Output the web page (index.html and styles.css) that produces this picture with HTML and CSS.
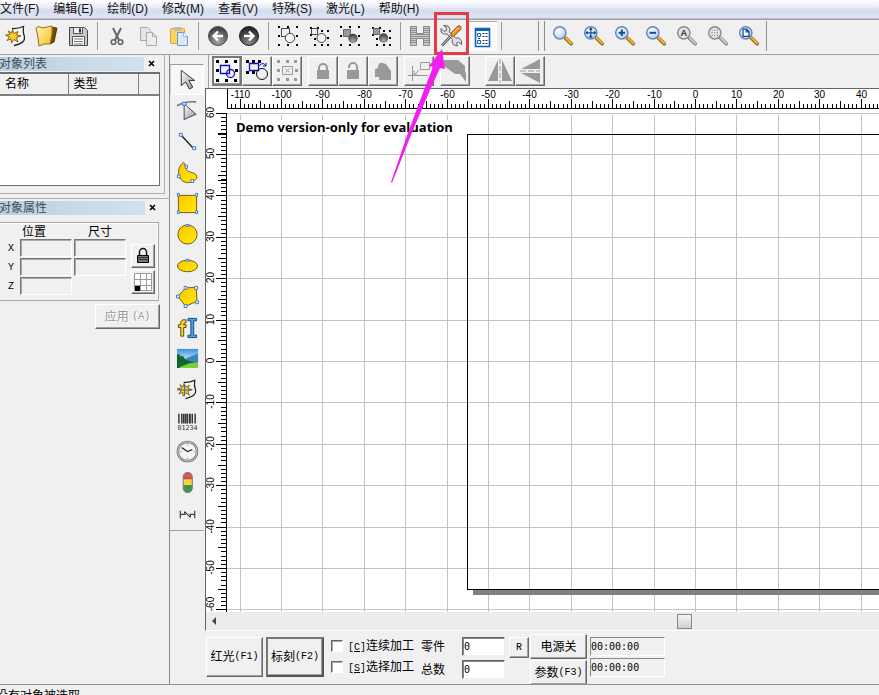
FILE: index.html
```html
<!DOCTYPE html>
<html lang="zh-CN">
<head>
<meta charset="utf-8">
<title>激光标刻</title>
<link rel="stylesheet" href="styles.css">
</head>
<body>
<svg class="defs" aria-hidden="true">
  <defs>
    <linearGradient id="gold" x1="0" y1="0" x2="1" y2="1"><stop offset="0" stop-color="#ffc400"/><stop offset="1" stop-color="#ffec00"/></linearGradient>
    <linearGradient id="folder" x1="0" y1="0" x2="1" y2="1"><stop offset="0" stop-color="#fff6b0"/><stop offset="1" stop-color="#f2c024"/></linearGradient>
    <linearGradient id="metal" x1="0" y1="0" x2="1" y2="1"><stop offset="0" stop-color="#fff"/><stop offset="1" stop-color="#8e9099"/></linearGradient>
    <radialGradient id="ball" cx=".5" cy=".75" r=".7"><stop offset="0" stop-color="#aaa"/><stop offset="1" stop-color="#3c3c3c"/></radialGradient>
    <radialGradient id="dark" cx=".5" cy=".85" r=".8"><stop offset="0" stop-color="#888"/><stop offset="1" stop-color="#222"/></radialGradient>
    <radialGradient id="lens" cx=".4" cy=".35" r=".7"><stop offset="0" stop-color="#fff"/><stop offset="1" stop-color="#a9ccf3"/></radialGradient>
    <linearGradient id="sky" x1="0" y1="0" x2="0" y2="1"><stop offset="0" stop-color="#3d8fe0"/><stop offset=".6" stop-color="#c9edfb"/></linearGradient>
    <linearGradient id="signal" x1="0" y1="0" x2="0" y2="1"><stop offset=".33" stop-color="#e05555"/><stop offset=".36" stop-color="#ffd43c"/><stop offset=".62" stop-color="#ffd43c"/><stop offset=".65" stop-color="#3a9c4e"/></linearGradient>
    <symbol id="magnifier" viewBox="0 0 24 24">
      <path d="M14.500 14 21 20.500" stroke="#9c6a10" stroke-width="4" stroke-linecap="round"/>
      <path d="M14.500 13.500 21 20" stroke="#f0b93c" stroke-width="2" stroke-linecap="round"/>
      <circle cx="8.500" cy="8.500" r="6.700" fill="url(#lens)" stroke="#6f86b4" stroke-width="1.600"/>
    </symbol>
    <symbol id="magnifier-off" viewBox="0 0 24 24">
      <path d="M14.500 14 21 20.500" stroke="#888" stroke-width="4" stroke-linecap="round"/>
      <path d="M14.500 13.500 21 20" stroke="#ccc" stroke-width="2" stroke-linecap="round"/>
      <circle cx="8.500" cy="8.500" r="6.700" fill="#e4e4e4" stroke="#8a8a8a" stroke-width="1.600"/>
    </symbol>
    <symbol id="handles" viewBox="0 0 24 24">
      <path d="M2 2h2v2H2zM11 2h2v2h-2zM20 2h2v2h-2zM2 11h2v2H2zM20 11h2v2h-2zM2 20h2v2H2zM11 20h2v2h-2zM20 20h2v2h-2z"/>
    </symbol>
    <symbol id="handles-small" viewBox="0 0 24 24">
      <path d="M3 3h2v2H3zM10 3h2v2h-2zM3 10h2v2H3zM14 6h2v2h-2zM20 6h2v2h-2zM20 13h2v2h-2zM7 14h2v2H7zM7 20h2v2H7zM14 20h2v2h-2zM20 20h2v2h-2z"/>
    </symbol>
    <symbol id="vector-file" viewBox="0 0 24 24">
      <path d="M8 4.500Q14 5 19.500 2.500Q18.500 8 20.500 13Q21.500 19 10 21.500" fill="#f7f7f7" stroke="#222" stroke-width="1.300"/>
      <path d="M8.500 5.500 10 9.500 14 7.500 12.500 11 17 12 12.500 13.500 14 18 10 15.500 7.500 19 7 15 3 16.500 5.500 13 1.500 11 6 10.500 4 7 7.500 9z" fill="#ffc831" stroke="#6b4b00" stroke-width=".8"/>
    </symbol>
  </defs>
</svg>
<div class="app">
  <nav class="menubar">
    <a href="#">文件(F)</a><a href="#">编辑(E)</a><a href="#">绘制(D)</a><a href="#">修改(M)</a><a href="#">查看(V)</a><a href="#">特殊(S)</a><a href="#">激光(L)</a><a href="#">帮助(H)</a>
  </nav>

  <div class="toolbar">
    <div class="tools">
      <button class="tool" aria-label="新建"><svg viewBox="0 0 24 24"><use href="#vector-file"/></svg></button>
      <button class="tool" aria-label="打开"><svg viewBox="0 0 24 24"><path d="M16 3 22 4 19 18 15 20z" fill="#7a4a00" stroke="#3a2500" stroke-width=".8"/><path d="M1 4Q4 1 7 4L17 2Q18 9 15 20Q9 19 4 22Q3 11 1 4z" fill="url(#folder)" stroke="#8c7220"/></svg></button>
      <button class="tool" aria-label="保存"><svg viewBox="0 0 24 24"><path d="M3.500 3.500h15l3 3v15h-18z" fill="#c9c9c9" stroke="#444"/><path d="M7.500 3.500h9v6h-9z" fill="#eee" stroke="#555"/><path d="M13 4.500h2v4h-2z" fill="#333"/><path d="M6.500 12.500h12v9h-12z" fill="#fff" stroke="#555"/><path d="M8 15h9M8 17.500h9M8 20h9" stroke="#777"/></svg></button>
      <span class="sep"></span>
      <button class="tool" aria-label="剪切"><svg viewBox="0 0 24 24" fill="none" stroke="#666"><path d="M8 4 14 16M16 4 10 16" stroke-width="2"/><circle cx="8.500" cy="18" r="2.300" stroke-width="1.600"/><circle cx="15.500" cy="18" r="2.300" stroke-width="1.600"/></svg></button>
      <button class="tool" aria-label="复制"><svg viewBox="0 0 24 24" fill="#e4e4e4" stroke="#aaa"><path d="M4.500 3.500h7l3 3v10h-10z"/><path d="M10.500 8.500h6l4 4v9h-10z" fill="#ececec"/><path d="M16.500 8.500v4h4" fill="none"/></svg></button>
      <button class="tool" aria-label="粘贴"><svg viewBox="0 0 24 24"><rect x="3.500" y="4.500" width="14" height="15" rx="1" fill="#fbd65a" stroke="#d4a72f"/><rect x="7" y="3" width="7" height="4" fill="#bbb"/><path d="M10.500 8.500h6l4 4v9h-10z" fill="#d5e8fc" stroke="#6d9bd0"/><path d="M16.500 8.500v4h4" fill="#fff" stroke="#8fb4df"/></svg></button>
      <span class="sep"></span>
      <button class="tool" aria-label="撤销"><svg viewBox="0 0 24 24"><circle cx="12" cy="12" r="9.500" fill="url(#ball)" stroke="#555"/><path d="M17 12H8M12 7.500 7.500 12l4.500 4.500" fill="none" stroke="#fff" stroke-width="2.400"/></svg></button>
      <button class="tool" aria-label="重做"><svg viewBox="0 0 24 24"><circle cx="12" cy="12" r="9.500" fill="url(#dark)" stroke="#222"/><path d="M7 12h9M12 7.500l4.500 4.500-4.500 4.500" fill="none" stroke="#fff" stroke-width="2.400"/></svg></button>
      <span class="sep"></span>
      <button class="tool" aria-label="组合"><svg viewBox="0 0 24 24"><use href="#handles"/><path d="M5.500 4.500h8v8h-8z" fill="#eee" stroke="#444"/><circle cx="14" cy="14" r="4.700" fill="#f4f4f4" stroke="#444"/></svg></button>
      <button class="tool" aria-label="分离组合"><svg viewBox="0 0 24 24"><use href="#handles-small"/><path d="M4.500 4.500h6v6h-6z" fill="#eee" stroke="#444"/><circle cx="14.500" cy="14" r="4.500" fill="#f4f4f4" stroke="#444"/></svg></button>
      <button class="tool" aria-label="群组"><svg viewBox="0 0 24 24"><use href="#handles"/><path d="M5.500 5.500h7v7h-7z" fill="#999" stroke="#666"/><circle cx="15" cy="14.500" r="4.700" fill="url(#ball)"/></svg></button>
      <button class="tool" aria-label="分离群组"><svg viewBox="0 0 24 24"><use href="#handles-small"/><path d="M4.500 4.500h6v6h-6z" fill="#999" stroke="#666"/><circle cx="14.500" cy="14" r="4.700" fill="url(#ball)"/></svg></button>
      <span class="sep"></span>
      <button class="tool" aria-label="填充"><svg viewBox="0 0 24 24"><path d="M2.500 2.500h6v7h7v-7h6v19h-6v-7h-7v7h-6z" fill="#c8c8c8" stroke="#888"/><path d="M3 4.500h5M3 6.500h5M3 8.500h5M3 10.500h18M3 12.500h18M3 14.500h5M3 16.500h5M3 18.500h5M16 4.500h5M16 6.500h5M16 8.500h5M16 14.500h5M16 16.500h5M16 18.500h5" stroke="#909090"/></svg></button>
      <button class="tool marked" aria-label="参数设置"><svg viewBox="0 0 24 24"><path d="M2 4.500 5 7.500 7.500 6.500 7 3 4.500 1.500 9 2 11 5 10.500 8 16.500 14 20 14 22.500 17 22.500 20.500 19.500 18 17.500 19 18.500 22 15 21 13 18 13.500 15.500 8 10 4.500 10 2 8z" fill="#dcdfe8" stroke="#555" stroke-width=".9"/><path d="M12 12 3 21.500" stroke="#555" stroke-width="2.600"/><path d="M12 12 3.500 21" stroke="#ddd"/><path d="M20 4 14 10" stroke="#8a4a08" stroke-width="5" stroke-linecap="round"/><path d="M20 4 14 10" stroke="#f5922b" stroke-width="3.400" stroke-linecap="round"/><path d="M19.500 3.500 14 9" stroke="#ffc887"/></svg></button>
      <button class="tool pressed" aria-label="对象属性栏"><svg viewBox="0 0 24 24"><path d="M5.500 3.500h14v18h-14z" fill="#fff" stroke="#1161bd" stroke-width="1.600"/><path d="M5 3h15v3H5z" fill="#1161bd"/><path d="M7.500 8.500h3v3h-3zM7.500 15.500h3v3h-3z" fill="#fff" stroke="#1161bd"/><path d="M12.500 8.500h2M15.500 8.500h2M12.500 11.500h2M15.500 11.500h2M12.500 15.500h2M15.500 15.500h2M12.500 18.500h2M15.500 18.500h2M8 13.500h2" stroke="#234"/></svg></button>
      <span class="sep"></span>
    </div>
    <div class="tools zoom-tools">
      <button class="tool" aria-label="缩放"><svg viewBox="0 0 24 24"><use href="#magnifier"/></svg></button>
      <button class="tool" aria-label="平移"><svg viewBox="0 0 24 24"><use href="#magnifier"/><path d="M8.500 3.500v10M3.500 8.500h10M7 5l1.500-1.500L10 5M7 12l1.500 1.500L10 12M5 7 3.500 8.500 5 10M12 7l1.500 1.500L12 10" fill="none" stroke="#164a94" stroke-width="1.300"/></svg></button>
      <button class="tool" aria-label="放大"><svg viewBox="0 0 24 24"><use href="#magnifier"/><path d="M8.500 5v7M5 8.500h7" stroke="#164a94" stroke-width="2.200"/></svg></button>
      <button class="tool" aria-label="缩小"><svg viewBox="0 0 24 24"><use href="#magnifier"/><path d="M5 8.500h7" stroke="#164a94" stroke-width="2.200"/></svg></button>
      <button class="tool" aria-label="显示全部"><svg viewBox="0 0 24 24"><use href="#magnifier-off"/><text x="8.500" y="12.500" class="lens-text">A</text></svg></button>
      <button class="tool" aria-label="显示选择"><svg viewBox="0 0 24 24"><use href="#magnifier-off"/><path d="M5 5.500h8M5 8.500h8M5 11.500h8" stroke="#555" stroke-dasharray="1 2"/></svg></button>
      <button class="tool" aria-label="显示页面"><svg viewBox="0 0 24 24"><use href="#magnifier"/><path d="M5.500 4.500h4L12 7v5.500H5.500z M9 4.500v3h3" fill="#fff" stroke="#164a94" stroke-width="1.400"/></svg></button>
    </div>
  </div>

  <div class="main">
    <aside class="side">
      <section class="panel">
        <header class="panel-head"><h2>对象列表</h2><button class="close" aria-label="关闭对象列表"><svg viewBox="0 0 8 8"><path d="M1 1l5 5M6 1 1 6"/></svg></button></header>
        <div class="list-box">
          <table class="list"><thead><tr><th class="col-name">名称</th><th class="col-type">类型</th><th></th></tr></thead></table>
        </div>
      </section>
      <section class="panel props">
        <header class="panel-head"><h2>对象属性</h2><button class="close" aria-label="关闭对象属性"><svg viewBox="0 0 8 8"><path d="M1 1l5 5M6 1 1 6"/></svg></button></header>
        <div class="group">
          <div class="fields">
            <span></span><span class="field-head">位置</span><span class="field-head size">尺寸</span>
            <label for="px">X</label><input id="px" disabled><input aria-label="X 尺寸" disabled>
            <label for="py">Y</label><input id="py" disabled><input aria-label="Y 尺寸" disabled>
            <label for="pz">Z</label><input id="pz" disabled>
          </div>
          <div class="prop-buttons">
            <button class="raised" aria-label="锁定比例"><svg viewBox="0 0 20 20"><path d="M6.500 9V6a3.500 3.500 0 0 1 7 0v3" fill="none" stroke="#111" stroke-width="1.500"/><path d="M4.500 9.500h11v7h-11z" fill="#777" stroke="#000"/><path d="M5 11.500h10M5 13.500h10" stroke="#333"/></svg></button>
            <button class="raised" aria-label="基准点"><svg viewBox="0 0 20 20"><path d="M1 1h18v18H1z" fill="#fff"/><path d="M1.500 1.500h17v17h-17zM7.500 1v18M13.500 1v18M1 7.500h18M1 13.500h18" fill="none" stroke="#999"/><path d="M2 14h5v5H2z"/></svg></button>
          </div>
        </div>
        <button class="raised apply" disabled>应用&nbsp;<span class="latin">(A)</span></button>
      </section>
    </aside>

    <div class="draw-bar">
      <button class="draw selected" aria-label="选取"><svg viewBox="0 0 24 24"><path d="M5.500 2.500v16l4.500-4 4 7.500 3.500-2-4-7h6z" fill="url(#metal)" stroke="#333"/></svg></button>
      <button class="draw" aria-label="节点"><svg viewBox="0 0 24 24"><path d="M1 7Q10 2 21 3" fill="none" stroke="#777" stroke-width="1.600"/><path d="M8.500 5v16.500l5-2.500 7.500-3z" fill="url(#metal)" stroke="#3c4260"/><path d="M6.500 3.500h4v3h-4z" fill="#cde" stroke="#3776c4"/></svg></button>
      <button class="draw" aria-label="直线"><svg viewBox="0 0 24 24"><path d="M5 5 18 19" stroke="#222" stroke-width="1.400"/><path d="M3.500 3.500h3v3h-3zM17.500 17.500h3v3h-3z" fill="#fff" stroke="#3776c4"/></svg></button>
      <button class="draw" aria-label="曲线"><svg viewBox="0 0 24 24"><path d="M8 1.500C3 5 2 10 3 15C4 20 9 23 14 22.500C20 21.500 23.500 17 21 14.500C18 11 13 12.500 11 9C9 6 10 2 8 1.500z" fill="url(#gold)" stroke="#6d5a10"/><path d="M9.500 4.500h2.500v3H9.500zM1.500 14.500h3v3h-3zM15.500 19.500h3v3h-3z" fill="#fff" stroke="#3776c4"/></svg></button>
      <button class="draw" aria-label="矩形"><svg viewBox="0 0 24 24"><path d="M2.500 3.500h19v18h-19z" fill="url(#gold)" stroke="#6d5a10"/><path d="M1.500 1.500h2v3h-2zM20.500 1.500h2v3h-2zM1.500 19.500h2v3h-2zM20.500 19.500h2v3h-2z" fill="#fff" stroke="#3776c4"/></svg></button>
      <button class="draw" aria-label="圆"><svg viewBox="0 0 24 24"><circle cx="12" cy="12" r="10" fill="url(#gold)" stroke="#6d5a10"/><path d="M10.500 1.500h3v2h-3z" fill="#fff" stroke="#3776c4"/></svg></button>
      <button class="draw" aria-label="椭圆"><svg viewBox="0 0 24 24"><ellipse cx="12" cy="12.500" rx="10.500" ry="6" fill="url(#gold)" stroke="#6d5a10"/><path d="M10.500 5.500h3v2h-3z" fill="#fff" stroke="#3776c4"/></svg></button>
      <button class="draw" aria-label="多边形"><svg viewBox="0 0 24 24"><path d="M2 12 10 3 21 2.500 22 17 10 22z" fill="url(#gold)" stroke="#6d5a10"/><path d="M.5 10.500h3v3h-3zM8.500 1.500h3v3h-3zM19.500 1.500h3v3h-3zM20.500 16.500h3v3h-3zM8.500 20.500h3v3h-3z" fill="#fff" stroke="#3776c4"/></svg></button>
      <button class="draw" aria-label="文字"><svg viewBox="0 0 24 24"><path d="M5 21V12H2.500V9H5V6Q6 3 10.500 4v3Q8 6.500 8 9h2.500v3H8v9z" fill="#ffd52e" stroke="#58480d"/><path d="M12.500 2.500h9v2.500h-3v15h3v2.500h-9v-2.500h3v-15h-3z" fill="#45a3e8" stroke="#134d88"/></svg></button>
      <button class="draw" aria-label="位图"><svg viewBox="0 0 24 24"><path d="M1 2h22v20H1z" fill="url(#sky)"/><path d="M10 12 17 9 23 7v10H12z" fill="#3c85c5"/><path d="M1 8 3 7 5 10 7 9 9 12 12 14 23 17v5H1z" fill="#15652e"/><path d="M6 20 14 17 23 16v6H3z" fill="#7dcd42"/></svg></button>
      <button class="draw" aria-label="矢量文件"><svg viewBox="0 0 24 24"><use href="#vector-file"/><path d="M1 12.500h16M9 7v12" stroke="#246bbf"/></svg></button>
      <button class="draw" aria-label="条码"><svg viewBox="0 0 24 24"><path d="M3 5v10M6 5v10M8 5v10M12 5v10M17 5v10M20 5v10" stroke="#333" stroke-width="1.500"/><path d="M10 5v10M14.500 5v10" stroke="#333" stroke-width="2"/><text x="12" y="22" class="bar-text">01234</text></svg></button>
      <button class="draw" aria-label="延时"><svg viewBox="0 0 24 24"><circle cx="12" cy="12" r="10" fill="#f4f4f4" stroke="#777" stroke-width="2.600"/><circle cx="12" cy="12" r="10" fill="none" stroke="#ccc"/><path d="M6 8 12 12 17 10" fill="none" stroke="#333" stroke-width="1.400"/><path d="M12 4v2M12 18v2M4 12h2M18 12h2" stroke="#aaa"/></svg></button>
      <button class="draw" aria-label="输入输出"><svg viewBox="0 0 24 24"><rect x="7.500" y="1.500" width="9.500" height="21" rx="4.500" fill="url(#signal)" stroke="#777"/><path d="M9 8q3.200-2 6.500 0M9 16q3.200 2 6.500 0" fill="none" stroke="#666"/></svg></button>
      <button class="draw" aria-label="测量"><svg viewBox="0 0 24 24"><path d="M4.500 9v8M19.500 9v8M5 13h5M14 13h5M9 10l6 6M9 10v3M15 13v3" fill="none" stroke="#444" stroke-width="1.300"/></svg></button>
    </div>

    <div class="work">
      <div class="object-bar">
        <button class="raised obj active" aria-label="选择模式"><svg viewBox="0 0 24 24"><path d="M1 1h3v3H1zM10 1h3v3h-3zM19 1h3v3h-3zM1 10h3v3H1zM1 20h3v3H1zM10 20h3v3h-3zM19 20h3v3h-3zM20 10h3v3h-3z"/><path d="M5.500 6.500h9v8h-9z" fill="none" stroke="#11c" stroke-width="1.300"/><circle cx="15.500" cy="14.500" r="4" fill="none" stroke="#11c" stroke-width="1.300"/></svg></button>
        <button class="raised obj" aria-label="旋转模式"><svg viewBox="0 0 24 24"><path d="M1 1h3v3H1zM7 1h3v3H7zM13 1h3v3h-3zM1 12h3v3H1zM7 12h3v3H7z"/><path d="M4.500 4.500h9v7h-9z" fill="none" stroke="#11c" stroke-width="1.300"/><circle cx="17" cy="15" r="5.500" fill="none" stroke="#111"/><path d="M14 7Q18 2 21 7M18 7h3V4" fill="none" stroke="#11c"/></svg></button>
        <button class="raised obj off" aria-label="变换"><svg viewBox="0 0 24 24"><path d="M2 1h3v3H2zM11 1h3v3h-3zM19 1h3v3h-3zM2 10h3v3H2zM2 19h3v3H2zM11 19h3v3h-3zM19 19h3v3h-3zM20 10h3v3h-3z"/><path d="M7.500 7.500h10v8h-10zM10.500 9.500l4 4M14.500 9.500l-4 4" fill="none" stroke="#999"/></svg></button>
        <span class="bar-gap"></span>
        <button class="raised obj off" aria-label="锁定"><svg viewBox="0 0 24 24"><path d="M8 12V9a4 4 0 0 1 8 0v3" fill="none" stroke="#999" stroke-width="2"/><path d="M6 11h12v9H6z"/></svg></button>
        <button class="raised obj off" aria-label="解锁"><svg viewBox="0 0 24 24"><path d="M8 9V8a4 4 0 0 1 8 0v4" fill="none" stroke="#999" stroke-width="2"/><path d="M6 11h12v9H6z"/></svg></button>
        <button class="raised obj off" aria-label="全部解锁"><svg viewBox="0 0 24 24"><path d="M4 10 7 9Q7 3 12 4Q16 5 17 8L20 12v9H8v-3H4z"/></svg></button>
        <span class="bar-gap"></span>
        <button class="raised obj off" aria-label="移至原点"><svg viewBox="0 0 24 24" fill="none" stroke="#999"><path d="M13.500 3.500h9v7h-9zM1 16.500h20M5.500 7v15M12 11 7 16M7 12v4h4"/></svg></button>
        <span class="bar-gap"></span>
        <button class="raised obj off" aria-label="排列"><svg viewBox="0 0 24 24"><path d="M1 1h14l7 6v5l1 3v8l-6-8h-5L1 7z"/></svg></button>
        <span class="bar-gap wide"></span>
        <button class="raised obj off" aria-label="水平镜像"><svg viewBox="0 0 24 24"><path d="M10 1v21H0zM14 1v21h10z"/><path d="M12 0v24" stroke="#999" stroke-dasharray="5 2"/></svg></button>
        <button class="raised obj off" aria-label="垂直镜像"><svg viewBox="0 0 24 24"><path d="M3 10 22 0v10zM3 14h19v10z"/><path d="M2 12h20" stroke="#999" stroke-dasharray="6 2"/></svg></button>
      </div>
      <div class="viewport">
        <svg id="workspace" class="workspace" role="img" aria-label="工作区"></svg>
      </div>
      <div class="scrollbar"><button class="scroll-left" aria-label="向左滚动"></button><span class="thumb"></span></div>
      <form class="controls">
        <button type="button" class="raised mark">红光<span class="latin">(F1)</span></button>
        <button type="button" class="raised mark default">标刻<span class="latin">(F2)</span></button>
        <div class="checks">
          <label><input type="checkbox"><span><span class="latin">[<u>C</u>]</span>连续加工</span></label>
          <label><input type="checkbox"><span><span class="latin">[<u>S</u>]</span>选择加工</span></label>
        </div>
        <div class="counts">
          <label for="part">零件</label><input id="part" value="0">
          <label for="total">总数</label><input id="total" value="0">
        </div>
        <button type="button" class="raised reset">R</button>
        <div class="stack">
          <button type="button" class="raised">电源关</button>
          <button type="button" class="raised">参数<span class="latin">(F3)</span></button>
        </div>
        <div class="times">
          <output>00:00:00</output>
          <output>00:00:00</output>
        </div>
      </form>
    </div>
  </div>
  <footer class="status"><span>没有对象被选取</span></footer>
</div>
<svg class="arrow" viewBox="0 0 56 136" aria-hidden="true"><path d="M52 1 55 21 50 20 40 42 23 82 2 135 1 134 19 82 34 42 43 19 39 18z" fill="#f01ff0"/></svg>
<script src="workspace.js"></script>
</body>
</html>
```
FILE: styles.css
```css
* { box-sizing: border-box; }
html, body { margin: 0; height: 100%; overflow: hidden; }
body { position: relative; background: #f0f0f0; color: #000; font: 12px/16px "Liberation Sans", "Noto Sans CJK SC", sans-serif; }
button, input { font: inherit; color: inherit; margin: 0; padding: 0; border-radius: 0; }
button { background: none; border: 0; display: flex; align-items: center; justify-content: center; white-space: nowrap; }
svg { display: block; }
h2 { margin: 0; font: inherit; }
.latin { font-family: "Liberation Mono", monospace; font-size: 10px; }
.defs { position: absolute; width: 0; height: 0; }
.app { display: flex; flex-direction: column; height: calc(100% + 8px); }

.menubar { display: flex; flex: none; gap: 14px; height: 19px; background: linear-gradient(#fff, #eef1fa 30%, #d5dcef 60%, #dfe5f4); border-bottom: 1px solid #b6bccc; line-height: 19px; }
.menubar a { color: #111; text-decoration: none; white-space: nowrap; }

.toolbar { display: flex; flex: none; height: 36px; padding: 1px 0 3px; border-top: 1px solid #a0a0a0; border-bottom: 1px solid #a0a0a0; }
.tools { display: flex; align-items: center; }
.tools:first-child { width: 539px; border-right: 1px solid #909090; }
.zoom-tools { margin-left: 5px; padding-left: 2px; border-left: 1px solid #909090; border-right: 1px solid #909090; width: 223px; }
.tool { flex: none; width: 31px; height: 30px; }
.tool svg { width: 24px; height: 24px; }
.zoom-tools .tool svg { width: 22px; height: 22px; }
.tool.pressed { background: #fbfbfb; border-top: 1px solid #aaa; }
.tool.marked { position: relative; }
.tool.marked::after { content: ""; position: absolute; box-sizing: border-box; left: -1px; top: -9px; width: 35px; height: 43px; border: 3px solid #e53b40; }
.sep { flex: none; width: 8px; height: 28px; background: linear-gradient(90deg, transparent 4px, #999 4px, #999 5px, transparent 5px); }
.lens-text { font: bold 10px "Liberation Sans", sans-serif; text-anchor: middle; fill: #333; }

.main { display: flex; flex: 1; min-height: 0; }
.side { flex: none; width: 170px; border-right: 1px solid #8a8a8a; }
.panel { width: 165px; padding: 1px 4px 7px 0; border-right: 1px solid #b0b0b0; border-bottom: 1px solid #b0b0b0; }
.panel-head { display: flex; align-items: center; height: 16px; }
.panel-head h2 { width: 146px; height: 14px; background: linear-gradient(90deg, #bccfdc, #d3e1ee); color: #3d4f5e; line-height: 14px; text-indent: -1px; }
.close { width: 16px; height: 14px; }
.close svg { width: 8px; height: 8px; stroke: #000; stroke-width: 1.600; }
.list-box { height: 114px; background: #fff; border: 1px solid #707070; border-width: 2px 1px 1px 0; }
.list { width: 100%; border-collapse: collapse; table-layout: fixed; background: #f0f0f0; }
.list th { height: 21px; padding: 0 0 0 5px; text-align: left; font-weight: normal; border-right: 1px solid #808080; border-bottom: 2px solid #808080; }
.list th:last-child { border-right: 0; }
.col-name { width: 68px; }
.col-type { width: 70px; }
.props { width: 170px; margin-top: 4px; padding: 1px 9px 0 0; border-top: 1px solid #b0b0b0; border-right: 0; border-bottom: 0; }
.group { display: flex; gap: 5px; height: 79px; width: 159px; margin-top: 6px; border: 1px solid #a8a8a8; border-left: 0; box-shadow: inset -1px 1px #fff; }
.fields { display: grid; grid-template-columns: 18px 52px 52px; grid-template-rows: 15px 18px 18px 18px; row-gap: 1px; column-gap: 2px; align-content: start; width: 126px; }
.field-head { padding-left: 2px; line-height: 18px; }
.field-head.size { padding-left: 14px; }
.fields label { font: 10px/20px "Liberation Mono", monospace; text-align: right; padding-right: 4px; }
.fields input { width: 52px; height: 18px; background: #f0f0f0; border: 1px solid; border-color: #777 #fff #fff #777; box-shadow: inset 1px 1px #aaa; }
.prop-buttons { display: flex; flex-direction: column; gap: 2px; padding-top: 21px; }
.prop-buttons .raised { width: 24px; height: 24px; }
.prop-buttons svg { width: 20px; height: 20px; }
.raised { background: #f0f0f0; border: 1px solid; border-color: #fff #696969 #696969 #fff; box-shadow: inset -1px -1px #a0a0a0; }
.apply { width: 65px; height: 25px; margin: 3px 0 0 95px; color: #999; text-shadow: 1px 1px #fff; }

.draw-bar { flex: none; width: 34px; height: 476px; padding-top: 9px; border-bottom: 1px solid #a0a0a0; }
.draw { width: 34px; height: 31px; }
.draw svg { width: 23px; height: 23px; }
.draw.selected { background: #f8f8f8; border: 1px solid; border-color: #999 #fff #fff #ccc; }
.bar-text { font: 7px "DejaVu Sans Mono", monospace; text-anchor: middle; fill: #333; }

.work { display: flex; flex-direction: column; flex: 1; min-width: 0; }
.object-bar { display: flex; flex: none; height: 33px; margin-left: 4px; padding: 1px 0 2px 3px; border-left: 1px solid #a0a0a0; }
.obj { flex: none; width: 30px; height: 30px; }
.obj svg { height: 24px; width: 24px; }
.obj.active { background: #f8f8f8; border: 2px solid #777; }
.obj.off { fill: #999; }
.bar-gap { flex: none; width: 6px; }
.bar-gap.wide { width: 15px; }
.viewport { flex: 1; min-height: 0; margin-left: 1px; background: #fff; border-left: 1px solid #666; border-top: 1px solid #666; overflow: hidden; }
.workspace { width: 100%; height: 100%; }
.workspace .tick { stroke: #000; }
.workspace .grid { stroke: #c4c4c4; }
.workspace .label { font: 10px "Liberation Sans", sans-serif; text-anchor: middle; }
.workspace .notice { font: bold 13px "Open Sans", sans-serif; }
.workspace .page { fill: none; stroke: #000; }
.workspace .shadow { fill: #808080; }
.scrollbar { display: flex; flex: none; align-items: center; height: 19px; margin-left: 1px; border-left: 1px solid #666; background: #ececec; border-bottom: 1px solid #fff; }
.scroll-left { width: 0; height: 0; margin-left: 6px; border: 4px solid transparent; border-left: 0; border-right-color: #444; }
.thumb { width: 15px; height: 15px; margin-left: calc(69% - 3px); background: linear-gradient(#f4f4f4, #cfcfcf); border: 1px solid #888; }

.controls { display: flex; flex: none; align-items: flex-start; height: 53px; padding: 3px 0 0 2px; }
.mark { width: 57px; height: 40px; margin: 3px 3px 0 0; }
.mark.default { border: 2px solid; border-color: #777 #555 #555 #777; width: 58px; }
.checks { display: grid; gap: 5px; width: 94px; padding: 4px 0 0 4px; }
.checks label { display: flex; gap: 5px; height: 16px; white-space: nowrap; }
.checks input { appearance: none; flex: none; width: 12px; height: 12px; margin-top: 2px; background: #fff; border: 1px solid; border-color: #666 #fff #fff #666; box-shadow: inset 1px 1px #aaa; }
.counts { display: grid; grid-template-columns: 41px 43px; row-gap: 2px; padding-top: 3px; }
.counts label { line-height: 21px; }
.counts input { width: 43px; height: 19px; padding: 0 1px; background: #fff; border: 1px solid; border-color: #666 #eee #eee #666; box-shadow: inset 1px 1px #888; font: 10px/14px "DejaVu Sans Mono", monospace; }
.reset { width: 20px; height: 21px; margin: 3px 1px 0 4px; font: 10px "Liberation Mono", monospace; }
.stack { display: grid; gap: 1px; width: 57px; margin-right: 3px; }
.stack .raised { height: 25px; }
.times { display: grid; gap: 2px; width: 75px; padding-top: 3px; }
.times output { height: 19px; border: 1px solid; border-color: #888 #fff #fff #888; font: 10px/17px "DejaVu Sans Mono", monospace; }
.status { flex: none; height: 19px; padding-top: 3px; border-top: 1px solid #909090; overflow: hidden; }
.status span { margin-left: -4px; }

.arrow { position: absolute; left: 390px; top: 48px; width: 56px; height: 136px; }
```
FILE: workspace.js
```js
const svg = document.getElementById("workspace");
const NS = "http://www.w3.org/2000/svg";
const UNIT = 4.14;          // pixels per millimetre
const ORIGIN = { x: 489, y: 272 };
const RULER = 20;

function add(name, attrs, text) {
  const el = document.createElementNS(NS, name);
  for (const key in attrs) el.setAttribute(key, attrs[key]);
  if (text !== undefined) el.textContent = text;
  svg.appendChild(el);
}
const snap = v => Math.round(v) + 0.5;
const line = (cls, x1, y1, x2, y2) => add("path", { class: cls, d: `M${x1} ${y1}L${x2} ${y2}` });
const tickLength = n => (n % 10 === 0 ? 10 : n % 5 === 0 ? 8 : 5);

function draw() {
  svg.replaceChildren();
  const { width, height } = svg.getBoundingClientRect();
  const firstX = Math.ceil((RULER + 2 - ORIGIN.x) / UNIT);
  const lastX = Math.floor((width - ORIGIN.x) / UNIT) + 2;
  const firstY = Math.ceil((ORIGIN.y - height) / UNIT);
  const lastY = Math.floor((ORIGIN.y - RULER - 3) / UNIT);

  for (let n = firstX; n <= lastX; n++)
    if (n % 10 === 0) { const x = snap(ORIGIN.x + n * UNIT); line("grid", x, RULER + 6, x, height); }
  for (let n = firstY; n <= lastY; n++)
    if (n % 10 === 0) { const y = snap(ORIGIN.y - n * UNIT); line("grid", RULER + 1, y, width, y); }

  const left = snap(ORIGIN.x - 55 * UNIT), top = snap(ORIGIN.y + 1 - 55 * UNIT), side = Math.round(110 * UNIT);
  add("rect", { class: "shadow", x: left + 5.5, y: top + side + 0.5, width: side, height: 5 });
  add("rect", { class: "page", x: left, y: top, width: side, height: side });

  add("rect", { x: 30, y: 31, width: 218, height: 15, fill: "#fff" });
  add("text", { class: "notice", x: 30, y: 43 }, "Demo version-only for evaluation");

  line("tick", RULER + 1, 19.5, width, 19.5);
  line("tick", RULER + 1.5, 0, RULER + 1.5, 20);
  for (let n = firstX; n <= lastX; n++) {
    const x = snap(ORIGIN.x + n * UNIT);
    line("tick", x, 20 - tickLength(n), x, 20);
    if (n % 10 === 0) add("text", { class: "label", x: x, y: 9 }, n);
  }
  line("tick", 20.5, 24, 20.5, height);
  for (let n = firstY; n <= lastY; n++) {
    const y = snap(ORIGIN.y - n * UNIT);
    line("tick", 20 - tickLength(n), y, 20, y);
    if (n % 10 === 0) {
      const labelY = Math.min(y - 1, height - 8);
      add("text", { class: "label", transform: `translate(8 ${labelY}) rotate(-90)` }, n);
    }
  }
  for (const y of [45.5, 91.5]) line("tick", 12, y, 20, y);
}
draw();
window.addEventListener("resize", draw);
```
